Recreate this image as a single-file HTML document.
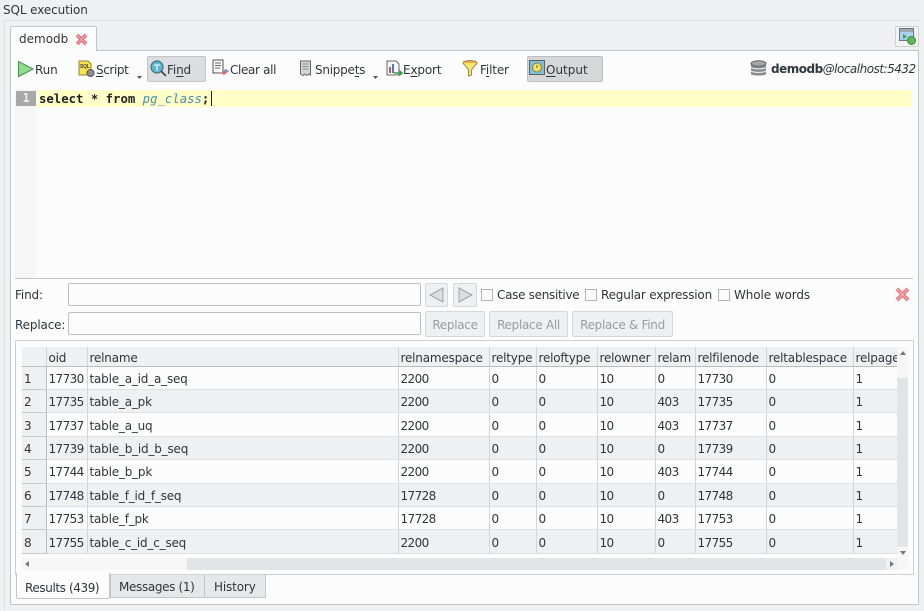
<!DOCTYPE html>
<html><head><meta charset="utf-8">
<style>
html,body{margin:0;padding:0}
body{width:924px;height:611px;position:relative;overflow:hidden;background:#eff0f1;font-family:"DejaVu Sans","Liberation Sans",sans-serif;font-size:12px;color:#31363b;letter-spacing:-.15px}
.a{position:absolute;box-sizing:border-box}
.t{position:absolute;white-space:nowrap;line-height:16px}
.btn{position:absolute;box-sizing:border-box;background:#eff0f1;border:1px solid #d6d7d9;border-radius:2px;color:#9a9c9e;text-align:center;line-height:24px;letter-spacing:-.3px;padding-top:1px}
.inp{position:absolute;box-sizing:border-box;background:#fcfcfc;border:1px solid #bfc0c2;border-radius:2px}
.cb{position:absolute;box-sizing:border-box;width:12px;height:12px;background:#fcfcfc;border:1px solid #b5b6b8}
u{text-decoration:underline;text-underline-offset:2px}
svg{position:absolute;overflow:visible}
table{position:absolute;left:22px;top:347px;border-collapse:collapse;table-layout:fixed;width:875px;background:#fcfcfc}
th{height:19px;padding:3px 0 0 2px;font-weight:normal;text-align:left;background:#eff0f1;border-right:1px solid #d3d4d6;border-bottom:1px solid #bcbdbf;white-space:nowrap;overflow:hidden;box-sizing:border-box;letter-spacing:-.2px}
td{height:23.43px;padding:2px 0 0 2px;box-sizing:border-box;border-right:1px solid #d3d4d6;border-bottom:1px solid #dfe0e2;white-space:nowrap;overflow:hidden;letter-spacing:-.2px}
td:nth-child(2),td:nth-child(n+4){letter-spacing:-.6px}
td:first-child{background:#eff0f1;border-right:1px solid #bcbdbf;border-bottom:1px solid #c8c9cb;padding-left:2px}
tr.e td{background:#eff0f1}
</style></head><body>
<div class="t" style="left:3px;top:2px;font-size:12px;letter-spacing:-.1px">SQL execution</div>
<div class="a" style="left:4px;top:20px;width:916px;height:1px;background:#dcdde0"></div>
<div class="a" style="left:4px;top:20px;width:1px;height:590px;background:#dcdde0"></div>
<div class="a" style="left:10px;top:50px;width:909px;height:555px;background:#fcfcfc;border:1px solid #c4c5c7"></div>
<div class="a" style="left:10px;top:26px;width:87px;height:25px;background:#fcfcfc;border:1px solid #c4c5c7;border-bottom:none;border-radius:2px 2px 0 0"></div>
<div class="t" style="left:19px;top:31px;letter-spacing:0">demodb</div>
<svg style="left:75px;top:33px" width="13" height="13" viewBox="0 0 13 13"><path d="M2 2L11 11M11 2L2 11" stroke="#d9666f" stroke-width="3.600"/><path d="M2 2L11 11M11 2L2 11" stroke="#f2a0a5" stroke-width="1.500"/></svg>
<div class="a" style="left:895px;top:26px;width:24px;height:21px;background:#f3f3f4;border:1px solid #cfd0d2;border-radius:2px"></div>
<svg style="left:899px;top:28px" width="17" height="17" viewBox="0 0 17 17"><rect x="0.500" y="0.500" width="14" height="12" fill="#a9d3ea" stroke="#6a7a85"/><rect x="1" y="1" width="13" height="3" fill="#9aa7ae"/><path d="M4 6L8 8.500L4 11Z" fill="#4c9a4c"/><circle cx="12.500" cy="12.500" r="4" fill="#5fb85f" stroke="#3d8a3d"/></svg>

<div class="a" style="left:147px;top:56px;width:59px;height:26px;background:#dcdde0;border:1px solid #c4c5c7;border-radius:2px"></div>
<div class="a" style="left:527px;top:56px;width:76px;height:26px;background:#d6d7d9;border:1px solid #bdbec0;border-radius:2px"></div>

<svg style="left:17px;top:60px" width="18" height="18" viewBox="0 0 18 18"><path d="M1.500 1.500L16 9L1.500 16.500Z" fill="#8fdc8f" stroke="#4a9a5a" stroke-width="1.200"/></svg>
<div class="t" style="left:35px;top:62px">Run</div>
<svg style="left:78px;top:60px" width="18" height="18" viewBox="0 0 18 18"><path d="M1 1H10L13 4V15H1Z" fill="#f7e24f" stroke="#8c8230"/><text x="2" y="8" font-size="5" font-family="Liberation Sans" font-weight="bold" fill="#444">SQL</text><circle cx="12.500" cy="13" r="3.500" fill="#8d8f91" stroke="#555"/></svg>
<div class="t" style="left:96px;top:62px;letter-spacing:-.4px"><u>S</u>cript</div>
<svg style="left:137px;top:76px" width="5" height="3"><path d="M0 0H5L2.500 3Z" fill="#555"/></svg>
<svg style="left:149px;top:60px" width="18" height="18" viewBox="0 0 18 18"><circle cx="8" cy="7" r="6" fill="#5bb8cf" stroke="#46707f" stroke-width="1.200"/><path d="M12 11L17 16" stroke="#444" stroke-width="1.600"/><path d="M5 5H11M8 5V11" stroke="#fff" stroke-width="1"/></svg>
<div class="t" style="left:167px;top:62px">Fi<u>n</u>d</div>
<svg style="left:212px;top:59px" width="18" height="18" viewBox="0 0 18 18"><rect x="1" y="1" width="10" height="13" fill="#fafafa" stroke="#555"/><path d="M3 4H9M3 6.500H9M3 9H8" stroke="#666"/><path d="M9 14L14 10L17 12L12 16Z" fill="#e0656d"/><path d="M12 11L14 10L17 12L15 13.500Z" fill="#6aa6d0"/></svg>
<div class="t" style="left:230px;top:62px;letter-spacing:-.35px">Clear all</div>
<svg style="left:299px;top:60px" width="14" height="18" viewBox="0 0 14 18"><path d="M1.500 1H11.500V15L10 14L8 15.500L6 14L4 15.500L1.500 14Z" fill="#d5d6d7" stroke="#666"/><path d="M3.500 4H9.500M3.500 6.500H9.500M3.500 9H9.500" stroke="#888"/></svg>
<div class="t" style="left:315px;top:62px;letter-spacing:-.25px">Snippe<u>t</u>s</div>
<svg style="left:373px;top:76px" width="5" height="3"><path d="M0 0H5L2.500 3Z" fill="#555"/></svg>
<svg style="left:386px;top:60px" width="18" height="18" viewBox="0 0 18 18"><path d="M1 1H10L13 4V15H1Z" fill="#f7f7f7" stroke="#666"/><rect x="3" y="7" width="2" height="6" fill="#c9505a"/><rect x="6" y="4" width="2" height="9" fill="#4a7fb0"/><path d="M8 13H15M13 10.500L16 13L13 15.500" stroke="#3d9a4d" stroke-width="1.600" fill="none"/></svg>
<div class="t" style="left:403px;top:62px">E<u>x</u>port</div>
<svg style="left:462px;top:60px" width="16" height="18" viewBox="0 0 16 18"><ellipse cx="8" cy="3" rx="7" ry="2.500" fill="#f0a83c" stroke="#9a8a50"/><path d="M1 3L6.500 10V16L9.500 15V10L15 3" fill="#f7e56c" stroke="#9a8a50"/></svg>
<div class="t" style="left:480px;top:62px">F<u>i</u>lter</div>
<svg style="left:529px;top:60px" width="16" height="16" viewBox="0 0 16 16"><rect x="0.500" y="0.500" width="15" height="14" fill="#7cc0dc" stroke="#5a5f63"/><circle cx="8" cy="7.500" r="4.500" fill="#f3e06a" stroke="#8a7d3a"/><path d="M8 5V8" stroke="#664"/></svg>
<div class="t" style="left:546px;top:62px;letter-spacing:0"><u>O</u>utput</div>

<svg style="left:750px;top:60px" width="17" height="18" viewBox="0 0 17 18"><path d="M1 3.500V14C1 16 16 16 16 14V3.500Z" fill="#8a8b8c"/><ellipse cx="8.500" cy="3.500" rx="7.500" ry="2.700" fill="#a5a6a7" stroke="#666"/><path d="M1 7C1 9.500 16 9.500 16 7M1 10.500C1 13 16 13 16 10.500" stroke="#eee" fill="none"/></svg>
<div class="t" style="left:771px;top:61px;font-weight:bold;letter-spacing:-.5px">demodb<span style="font-weight:normal;font-style:italic">@localhost:5432</span></div>

<div class="a" style="left:15px;top:89px;width:898px;height:190px;background:#fcfcfc;border-bottom:1px solid #c4c5c7"></div>
<div class="a" style="left:15px;top:89px;width:21px;height:189px;background:#f6f6f6"></div>
<div class="a" style="left:16px;top:91px;width:20px;height:15px;background:#a8a8a8"></div>
<div class="t" style="left:16px;top:91px;width:20px;text-align:center;color:#eee;font:bold 12px 'DejaVu Sans Mono',monospace">1</div>
<div class="a" style="left:38px;top:90px;width:874px;height:17px;background:#ffffc8"></div>
<div class="t" style="left:39px;top:91px;font-family:'DejaVu Sans Mono',monospace;font-size:12.300px;color:#222;letter-spacing:0"><b>select</b> <b>*</b> <b>from</b> <i style="color:#4c8fa8">pg_class</i><b>;</b></div>
<div class="a" style="left:211px;top:91px;width:1px;height:15px;background:#222"></div>

<div class="t" style="left:15px;top:287px">Find:</div>
<div class="inp" style="left:68px;top:283px;width:353px;height:23px"></div>
<div class="btn" style="left:425px;top:283px;width:23px;height:24px"></div>
<svg style="left:429px;top:287px" width="15" height="16"><path d="M14 1V15L1 8Z" fill="#dcdddf" stroke="#a2a3a5"/></svg>
<div class="btn" style="left:453px;top:283px;width:24px;height:24px"></div>
<svg style="left:458px;top:287px" width="15" height="16"><path d="M1 1V15L14 8Z" fill="#dcdddf" stroke="#a2a3a5"/></svg>
<div class="cb" style="left:481px;top:289px"></div>
<div class="t" style="left:497px;top:287px;letter-spacing:-.3px">Case sensitive</div>
<div class="cb" style="left:585px;top:289px"></div>
<div class="t" style="left:601px;top:287px;letter-spacing:-.2px">Regular expression</div>
<div class="cb" style="left:718px;top:289px"></div>
<div class="t" style="left:734px;top:287px;letter-spacing:-.1px">Whole words</div>
<svg style="left:895px;top:287px" width="15" height="15" viewBox="0 0 15 15"><path d="M2 2L13 13M13 2L2 13" stroke="#de6d75" stroke-width="3.800"/><path d="M2 2L13 13M13 2L2 13" stroke="#f4a9ad" stroke-width="1.600"/></svg>

<div class="t" style="left:15px;top:317px">Replace:</div>
<div class="inp" style="left:68px;top:312px;width:353px;height:23px"></div>
<div class="btn" style="left:425px;top:311px;width:60px;height:26px">Replace</div>
<div class="btn" style="left:489px;top:311px;width:79px;height:26px">Replace All</div>
<div class="btn" style="left:572px;top:311px;width:101px;height:26px">Replace &amp; Find</div>

<div class="a" style="left:15px;top:340px;width:899px;height:235px;background:#fcfcfc;border:1px solid #cfd0d2"></div>
<table>
<colgroup><col style="width:24px"><col style="width:41px"><col style="width:311px"><col style="width:91px"><col style="width:47px"><col style="width:61px"><col style="width:58px"><col style="width:40px"><col style="width:71px"><col style="width:87px"><col style="width:44px"></colgroup>
<tr><th></th><th>oid</th><th>relname</th><th>relnamespace</th><th>reltype</th><th>reloftype</th><th>relowner</th><th>relam</th><th>relfilenode</th><th>reltablespace</th><th style="border-right:none">relpages</th></tr>
<tr><td>1</td><td>17730</td><td>table_a_id_a_seq</td><td>2200</td><td>0</td><td>0</td><td>10</td><td>0</td><td>17730</td><td>0</td><td>1</td></tr>
<tr class="e"><td>2</td><td>17735</td><td>table_a_pk</td><td>2200</td><td>0</td><td>0</td><td>10</td><td>403</td><td>17735</td><td>0</td><td>1</td></tr>
<tr><td>3</td><td>17737</td><td>table_a_uq</td><td>2200</td><td>0</td><td>0</td><td>10</td><td>403</td><td>17737</td><td>0</td><td>1</td></tr>
<tr class="e"><td>4</td><td>17739</td><td>table_b_id_b_seq</td><td>2200</td><td>0</td><td>0</td><td>10</td><td>0</td><td>17739</td><td>0</td><td>1</td></tr>
<tr><td>5</td><td>17744</td><td>table_b_pk</td><td>2200</td><td>0</td><td>0</td><td>10</td><td>403</td><td>17744</td><td>0</td><td>1</td></tr>
<tr class="e"><td>6</td><td>17748</td><td>table_f_id_f_seq</td><td>17728</td><td>0</td><td>0</td><td>10</td><td>0</td><td>17748</td><td>0</td><td>1</td></tr>
<tr><td>7</td><td>17753</td><td>table_f_pk</td><td>17728</td><td>0</td><td>0</td><td>10</td><td>403</td><td>17753</td><td>0</td><td>1</td></tr>
<tr class="e"><td>8</td><td>17755</td><td>table_c_id_c_seq</td><td>2200</td><td>0</td><td>0</td><td>10</td><td>0</td><td>17755</td><td>0</td><td>1</td></tr>
</table>
<div class="a" style="left:22px;top:555px;width:875px;height:3px;background:#fcfcfc"></div>
<div class="a" style="left:22px;top:558px;width:886px;height:12px;background:#e3e4e6"></div>
<div class="a" style="left:22px;top:558px;width:165px;height:12px;background:#f6f6f7"></div>
<svg style="left:25px;top:561px" width="4" height="6"><path d="M4 0V6L0 3Z" fill="#777"/></svg>
<div class="a" style="left:886px;top:558px;width:11px;height:12px;background:#f0f0f1"></div>
<svg style="left:890px;top:561px" width="4" height="6"><path d="M0 0V6L4 3Z" fill="#777"/></svg>
<div class="a" style="left:897px;top:347px;width:11px;height:223px;background:#e3e4e6"></div>
<div class="a" style="left:897px;top:347px;width:11px;height:31px;background:#f6f6f7"></div>
<svg style="left:900px;top:351px" width="6" height="4"><path d="M0 4H6L3 0Z" fill="#777"/></svg>
<div class="a" style="left:897px;top:547px;width:11px;height:23px;background:#f6f6f7"></div>
<svg style="left:900px;top:551px" width="6" height="4"><path d="M0 0H6L3 4Z" fill="#777"/></svg>

<div class="a" style="left:16px;top:573px;width:94px;height:26px;background:#fcfcfc;border:1px solid #c4c5c7;border-top:none;border-radius:0 0 2px 2px"></div>
<div class="t" style="left:25px;top:580px;letter-spacing:-.4px">Results (439)</div>
<div class="a" style="left:110px;top:575px;width:95px;height:23px;background:#e6e7e9;border:1px solid #c4c5c7;border-top:none"></div>
<div class="t" style="left:119px;top:579px;letter-spacing:-.35px">Messages (1)</div>
<div class="a" style="left:204px;top:575px;width:62px;height:23px;background:#e6e7e9;border:1px solid #c4c5c7;border-top:none"></div>
<div class="t" style="left:214px;top:579px">History</div>
</body></html>
